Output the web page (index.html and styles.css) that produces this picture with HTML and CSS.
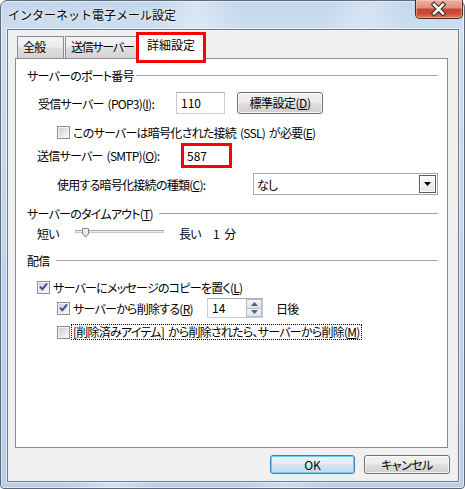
FILE: index.html
```html
<!DOCTYPE html>
<html lang="ja">
<head>
<meta charset="utf-8">
<title>インターネット電子メール設定</title>
<link rel="stylesheet" href="styles.css">
</head>
<body>
<div class="window">
  <div class="titlebar">
    <span class="title">インターネット電子メール設定</span>
    <div class="close">
      <svg width="48" height="19" viewBox="0 0 48 19">
        <path d="M19.5 5.5 L28.5 14.5 M28.5 5.5 L19.5 14.5" stroke="#3a2a2a" stroke-width="4.8" stroke-linecap="square" fill="none"/>
        <path d="M19.5 5.5 L28.5 14.5 M28.5 5.5 L19.5 14.5" stroke="#ffffff" stroke-width="2.6" stroke-linecap="square" fill="none"/>
      </svg>
    </div>
  </div>
  <div class="client">
    <div class="tabs">
      <div class="tab tab-general">全般</div>
      <div class="tab tab-outgoing">送信サーバー</div>
      <div class="tab tab-active">詳細設定</div>
    </div>
    <div class="panel">
      <div class="group-head r-h1"><span>サーバーのポート番号</span><i class="rule"></i></div>

      <div class="row r-pop">
        <span class="label lbl-pop">受信サーバー (POP3)(<u>I</u>):</span>
        <div class="textbox tb-pop">110</div>
        <button class="btn btn-std">標準設定(<u>D</u>)</button>
      </div>

      <div class="row r-ssl">
        <span class="cb"></span>
        <span class="cb-text">このサーバーは暗号化された接続 (SSL) が必要(<u>E</u>)</span>
      </div>

      <div class="row r-smtp">
        <span class="label lbl-smtp">送信サーバー (SMTP)(<u>O</u>):</span>
        <div class="mark-box">587</div>
      </div>

      <div class="row r-enc">
        <span class="label lbl-enc">使用する暗号化接続の種類(<u>C</u>):</span>
        <div class="combo">
          <span class="combo-text">なし</span>
          <span class="combo-btn"><svg width="7" height="4" viewBox="0 0 7 4"><path d="M0 0 H7 L3.5 4 Z" fill="#000"/></svg></span>
        </div>
      </div>

      <div class="group-head r-h2"><span>サーバーのタイムアウト(<u>T</u>)</span><i class="rule"></i></div>

      <div class="row r-slider">
        <span class="lbl-short">短い</span>
        <div class="slider">
          <div class="track"></div>
          <svg class="thumb" width="7" height="10" viewBox="0 0 7 10">
            <defs><linearGradient id="tg" x1="0" y1="0" x2="0" y2="1"><stop offset="0" stop-color="#f7f7f7"/><stop offset="1" stop-color="#d4d4d4"/></linearGradient></defs>
            <path d="M0.5 0.5 H6.5 V6 L3.5 9.2 L0.5 6 Z" fill="url(#tg)" stroke="#858585"/>
          </svg>
        </div>
        <span class="lbl-long">長い</span>
        <span class="lbl-min">1 分</span>
      </div>

      <div class="group-head r-h3"><span>配信</span><i class="rule"></i></div>

      <div class="row r-copy">
        <span class="cb checked"><svg width="9" height="9" viewBox="0 0 9 9"><path d="M1 4.6 L3.4 7.2 L8 1.4" stroke="#3b4f8d" stroke-width="1.9" fill="none"/></svg></span>
        <span class="cb-text">サーバーにメッセージのコピーを置く(<u>L</u>)</span>
      </div>

      <div class="row r-del">
        <span class="cb checked"><svg width="9" height="9" viewBox="0 0 9 9"><path d="M1 4.6 L3.4 7.2 L8 1.4" stroke="#3b4f8d" stroke-width="1.9" fill="none"/></svg></span>
        <span class="cb-text lbl-del">サーバーから削除する(<u>R</u>)</span>
        <div class="spin">
          <span class="spin-text">14</span>
          <span class="spin-btns">
            <span class="spin-up"><svg width="7" height="4" viewBox="0 0 7 4"><path d="M0 4 H7 L3.5 0 Z" fill="#4d6185"/></svg></span>
            <span class="spin-down"><svg width="7" height="4" viewBox="0 0 7 4"><path d="M0 0 H7 L3.5 4 Z" fill="#4d6185"/></svg></span>
          </span>
        </div>
        <span class="lbl-days">日後</span>
      </div>

      <div class="row r-trash">
        <span class="cb"></span>
        <span class="focus-text">[削除済みアイテム] から削除されたら、サーバーから削除(<u>M</u>)</span>
      </div>
    </div>
    <div class="footer">
      <button class="btn btn-ok">OK</button>
      <button class="btn btn-cancel">キャンセル</button>
    </div>
  </div>
</div>
</body>
</html>
```

FILE: styles.css
```css
* { box-sizing: border-box; }
html, body { margin: 0; padding: 0; }
body {
  width: 465px;
  height: 489px;
  overflow: hidden;
  background: #ffffff;
  font-family: "Noto Sans CJK JP", "Noto Sans", sans-serif;
  font-size: 12px;
  color: #000;
}
u { text-decoration: underline; text-underline-offset: 1px; text-decoration-thickness: 1px; }

.window {
  width: 465px;
  height: 489px;
  border: 1px solid #5b6878;
  border-radius: 7px 7px 4px 4px;
  padding: 0 5px 6px 6px;
  display: flex;
  flex-direction: column;
  box-shadow: inset 0 0 0 1px rgba(255,255,255,0.55);
  background:
    linear-gradient(100deg, rgba(255,255,255,0) 28%, rgba(255,255,255,0.35) 36%, rgba(255,255,255,0) 44%, rgba(255,255,255,0) 60%, rgba(255,255,255,0.28) 67%, rgba(255,255,255,0) 74%),
    linear-gradient(180deg, #c3d6ec 0%, #cddef0 6%, #bdd2ea 60%, #b9cfe8 100%);
}

.titlebar {
  height: 28px;
  flex: none;
  display: flex;
  justify-content: space-between;
  align-items: flex-start;
}
.title {
  margin-left: 1px;
  margin-top: 5px;
  line-height: 18px;
  font-size: 12px;
  color: #000;
  text-shadow: 0 0 6px rgba(255,255,255,0.9), 0 0 2px rgba(255,255,255,0.9);
}
.close {
  width: 48px;
  height: 19px;
  margin-top: -1px;
  margin-right: -4px;
  border: 1px solid #4e2520;
  border-top: none;
  border-radius: 0 0 5px 5px;
  background: linear-gradient(180deg, #eab0a2 0%, #e0907e 42%, #c9452d 52%, #cc4c33 75%, #de7a5c 100%);
  box-shadow: inset 0 0 0 1px rgba(255,220,210,0.45);
  display: flex;
}
.close svg { margin-left: -1px; margin-top: -1px; }

.client {
  height: 453px;
  flex: none;
  border: 1px solid #6f7c8c;
  background: #f0f0f0;
  display: flex;
  flex-direction: column;
  box-shadow: 0 0 0 1px rgba(255,255,255,0.55);
}

.tabs {
  height: 28px;
  flex: none;
  display: flex;
  align-items: flex-end;
  padding-left: 9px;
  letter-spacing: -0.75px;
  font-feature-settings: "palt" 1;
}
.tab {
  height: 22px;
  border: 1px solid #898c95;
  border-bottom: none;
  background: linear-gradient(180deg, #f3f3f3 0%, #ececec 45%, #dedede 55%, #d3d3d3 100%);
  line-height: 20px;
  padding-left: 5px;
  white-space: nowrap;
  overflow: hidden;
}
.tab-general { width: 47px; }
.tab-outgoing { width: 73px; margin-left: 1px; letter-spacing: -1.3px; }
.tab-active {
  position: relative;
  z-index: 1;
  width: 69px;
  height: 26px;
  margin-left: -2px;
  margin-bottom: -1px;
  background: #ffffff;
  padding-left: 10px;
  line-height: 22px;
  letter-spacing: 0;
  overflow: visible;
}
.tab-active::after {
  content: "";
  position: absolute;
  left: -1px;
  right: -2px;
  top: -2px;
  bottom: -4px;
  border: 3px solid #ff0000;
}

.panel {
  width: 433px;
  height: 390px;
  flex: none;
  margin-left: 7px;
  border: 1px solid #898c95;
  background: #ffffff;
  padding: 8px 9px 0 11px;
  display: flex;
  flex-direction: column;
}

.row, .group-head {
  display: flex;
  align-items: center;
  flex: none;
  white-space: nowrap;
  font-feature-settings: "palt" 1;
  letter-spacing: -0.75px;
  word-spacing: 2px;
}
.group-head { height: 16px; }
.group-head .rule {
  flex: 1;
  height: 1px;
  background: #a3a3a3;
  margin-left: 6px;
}
.r-h1 .rule { margin-left: 2px; }
.r-h1 { margin-top: 0; }
.r-pop { height: 22px; margin-top: 9px; padding-left: 11px; }
.r-ssl { height: 16px; margin-top: 10px; padding-left: 30px; }
.r-smtp { height: 25px; margin-top: 3px; padding-left: 10px; }
.r-enc { height: 22px; margin-top: 5px; padding-left: 30px; }
.r-h2 { margin-top: 10px; }
.r-slider { height: 16px; margin-top: 4px; padding-left: 10px; }
.r-h3 { margin-top: 11px; }
.r-copy { height: 16px; margin-top: 11px; padding-left: 10px; }
.r-del { height: 20px; margin-top: 3px; padding-left: 30px; }
.r-trash { height: 16px; margin-top: 6px; padding-left: 30px; }

.label { flex: none; }
.lbl-pop { width: 138px; }
.lbl-smtp { width: 144px; }
.lbl-enc { width: 196px; }

.textbox {
  width: 49px;
  height: 22px;
  border: 1px solid #c9cbd0;
  border-top-color: #abadb3;
  background: #fff;
  padding-left: 4px;
  line-height: 20px;
  letter-spacing: 0;
}
.mark-box {
  width: 51px;
  height: 25px;
  border: 3px solid #ff0000;
  background: #fff;
  padding-left: 3px;
  line-height: 19px;
  letter-spacing: 0;
}

.btn {
  font-family: inherit;
  font-size: 12px;
  color: #000;
  padding: 0;
  border: 1px solid #707070;
  border-radius: 3px;
  background: linear-gradient(180deg, #f2f2f2 0%, #ebebeb 45%, #dddddd 55%, #cfcfcf 100%);
  box-shadow: inset 0 0 0 1px rgba(255,255,255,0.75);
  font-feature-settings: "palt" 1;
  white-space: nowrap;
}
.btn-std { width: 86px; height: 22px; margin-left: 12px; line-height: 18px; letter-spacing: -0.5px; }

.cb {
  flex: none;
  width: 13px;
  height: 13px;
  border: 1px solid #8e8f8f;
  background:
    linear-gradient(135deg, #cbcfd5 0%, #e6e8eb 60%, #f6f6f6 100%) content-box,
    #f4f4f4;
  padding: 1px;
  display: flex;
  align-items: center;
  justify-content: center;
}
.cb svg { margin-left: -1px; margin-top: -1px; flex: none; }
.cb-text { margin-left: 3px; }
.lbl-del { width: 134px; flex: none; }

.combo {
  width: 186px;
  height: 22px;
  border: 1px solid #a9a9a9;
  background: #fff;
  display: flex;
  align-items: center;
  justify-content: space-between;
  padding: 1px;
}
.combo-text { padding-left: 2px; }
.combo-btn {
  width: 17px;
  height: 18px;
  border: 1px solid #5a5a5a;
  background: linear-gradient(180deg, #fbfbfb 0%, #e4e4e4 100%);
  box-shadow: inset 0 0 0 1px #ffffff;
  display: flex;
  align-items: center;
  justify-content: center;
}

.lbl-short { width: 38px; flex: none; }
.slider {
  position: relative;
  width: 89px;
  height: 16px;
  flex: none;
}
.track {
  position: absolute;
  left: 0;
  right: 0;
  top: 5px;
  height: 3px;
  border: 1px solid #c8c8c8;
  border-top-color: #a9a9a9;
  background: #e9e9e9;
}
.thumb {
  position: absolute;
  left: 7px;
  top: 3px;
}
.lbl-long { margin-left: 15px; width: 34px; flex: none; }
.lbl-min { letter-spacing: 0; }

.spin {
  width: 56px;
  height: 20px;
  border: 1px solid #c9cbd0;
  border-top-color: #abadb3;
  background: #fff;
  display: flex;
  justify-content: space-between;
  align-items: stretch;
  letter-spacing: 0;
}
.spin-text { padding-left: 4px; line-height: 18px; }
.spin-btns {
  width: 16px;
  display: flex;
  flex-direction: column;
}
.spin-up, .spin-down {
  flex: 1;
  border: 1px solid #b5bcc7;
  background: linear-gradient(180deg, #f5f6f8 0%, #dfe3e8 100%);
  display: flex;
  align-items: center;
  justify-content: center;
}
.spin-down { border-top: none; }
.lbl-days { margin-left: 13px; }

.focus-text {
  margin-left: 1px;
  border: 1px dotted #000;
  padding: 0 1px;
  line-height: 14px;
  height: 16px;
}

.footer {
  display: flex;
  justify-content: flex-end;
  gap: 9px;
  margin-top: 7px;
  padding-right: 8px;
}
.btn-ok {
  width: 85px;
  height: 19px;
  line-height: 15px;
  border-color: #3c7fb1;
  box-shadow: inset 0 0 0 1px #6fcdf5;
  background: linear-gradient(180deg, #eaf4fa 0%, #e1eef6 45%, #d3e3ee 55%, #c8dae8 100%);
}
.btn-cancel { width: 86px; height: 19px; line-height: 15px; letter-spacing: -0.5px; }
```
